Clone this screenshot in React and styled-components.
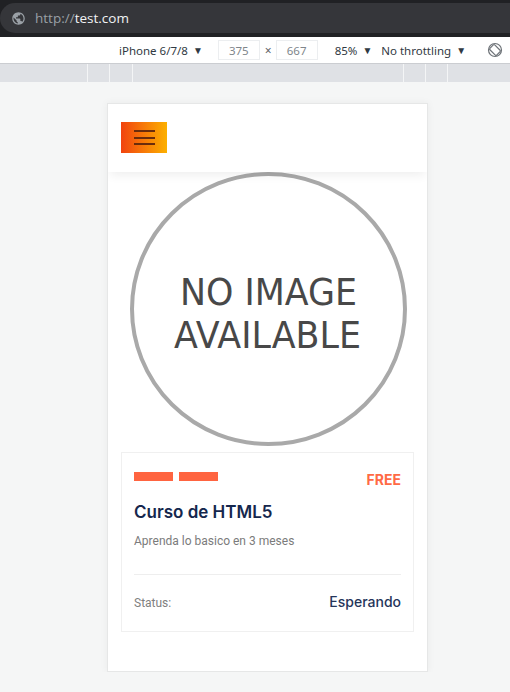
import React from 'react'
import styled, { createGlobalStyle } from 'styled-components'

const GlobalStyle = createGlobalStyle`
  html, body {
    margin: 0;
    padding: 0;
    background: #f5f6f6;
  }
  body {
    font-family: "Noto Sans", sans-serif;
  }
`

const BrowserBar = styled.div`
  height: 37px;
  background: #202124;
  box-sizing: border-box;
  padding: 3px 0 4px 0;
`

const AddressPill = styled.div`
  height: 30px;
  background: #35363a;
  border-top-left-radius: 15px;
  border-bottom-left-radius: 15px;
  display: flex;
  align-items: center;
  padding-left: 11px;
  gap: 9px;
  font-family: "Open Sans", sans-serif;
  font-size: 13.5px;
  color: #9aa0a6;
`

const Host = styled.span`
  color: #f1f3f4;
`

const DeviceBar = styled.div`
  height: 26px;
  background: #ffffff;
  border-bottom: 1px solid #cbcdd1;
  display: flex;
  align-items: center;
  padding-left: 119px;
  font-family: "Noto Sans", sans-serif;
  font-size: 11.5px;
  color: #303942;
`

const ToolItem = styled.div`
  display: flex;
  align-items: center;
  gap: 5px;
  margin-left: ${({ $ml }) => $ml || 0}px;
  white-space: nowrap;
`

const Caret = styled.span`
  font-size: 10px;
  color: #303942;
`

const SizeInput = styled.div`
  width: 42px;
  height: 20px;
  box-sizing: border-box;
  border: 1px solid #eceef0;
  display: flex;
  align-items: center;
  justify-content: center;
  color: #80868b;
  margin-left: ${({ $ml }) => $ml || 0}px;
`

const Times = styled.span`
  margin-left: 5px;
  margin-right: 4px;
  color: #5f6368;
  font-size: 12px;
`

const Ruler = styled.div`
  height: 18px;
  background: #dfe1e5;
  display: flex;
`

const RulerSeg = styled.div`
  box-sizing: border-box;
  width: ${({ $w }) => $w}px;
  height: 100%;
  border-right: 1px solid #f4f5f6;
  flex: ${({ $grow }) => ($grow ? 1 : 'none')};
  border-right-width: ${({ $grow }) => ($grow ? 0 : 1)}px;
`

const Phone = styled.div`
  margin: 21px 0 0 107px;
  width: 321px;
  height: 569px;
  box-sizing: border-box;
  border: 1px solid #e6e7e7;
  background: #ffffff;
  box-shadow: 0 0 8px rgba(0, 0, 0, 0.05);
  overflow: hidden;
  display: flex;
  flex-direction: column;
`

const Header = styled.header`
  height: 68px;
  flex: none;
  box-sizing: border-box;
  padding: 18px 13px 0;
  background: #fff;
  position: relative;
  z-index: 1;
  box-shadow: 0 5px 10px -2px rgba(0, 0, 0, 0.07);
`

const MenuButton = styled.div`
  width: 46px;
  height: 31px;
  background: linear-gradient(90deg, #f1430f 0%, #f77a08 50%, #fcb000 100%);
  display: flex;
  flex-direction: column;
  align-items: center;
  justify-content: center;
  gap: 4.5px;
`

const MenuLine = styled.span`
  display: block;
  width: 21px;
  height: 2px;
  background: #6a2c0c;
`

const ImageArea = styled.div`
  height: 280px;
  flex: none;
  display: flex;
  justify-content: center;
`

const Card = styled.div`
  margin: 0 13px;
  border: 1px solid #f0f0f0;
  padding: 19px 12px 18px;
`

const TopRow = styled.div`
  display: flex;
  justify-content: space-between;
  align-items: flex-start;
  height: 18px;
`

const Bars = styled.div`
  display: flex;
  gap: 6px;
`

const Bar = styled.span`
  display: block;
  width: 39px;
  height: 9px;
  background: #ff6440;
`

const Price = styled.span`
  font-family: "Inter", sans-serif;
  font-weight: 700;
  font-size: 14px;
  line-height: 18px;
  color: #ff6a45;
  margin-top: -1px;
`

const Title = styled.h3`
  margin: 10px 0 0;
  font-family: "Inter", sans-serif;
  font-weight: 600;
  font-size: 17px;
  line-height: 24px;
  color: #15274d;
`

const Desc = styled.p`
  margin: 9px 0 0;
  font-family: "Roboto", sans-serif;
  font-size: 12px;
  line-height: 16px;
  color: #7b7b7b;
`

const Footer = styled.div`
  margin-top: 25px;
  border-top: 1px solid #eeeeee;
  padding-top: 17px;
  display: flex;
  justify-content: space-between;
  align-items: baseline;
`

const StatusLabel = styled.span`
  font-family: "Roboto", sans-serif;
  font-size: 12px;
  line-height: 20px;
  color: #808080;
`

const StatusValue = styled.span`
  font-family: "Inter", sans-serif;
  font-weight: 500;
  font-size: 14px;
  line-height: 20px;
  color: #25355a;
`

const Globe = () => (
  <svg width="15" height="15" viewBox="0 0 24 24">
    <path
      fill="#9aa0a6"
      d="M12 2C6.48 2 2 6.48 2 12s4.48 10 10 10 10-4.48 10-10S17.52 2 12 2zm-1 17.93c-3.95-.49-7-3.85-7-7.93 0-.62.08-1.21.21-1.79L9 15v1c0 1.1.9 2 2 2v1.93zm6.9-2.54c-.26-.81-1-1.39-1.9-1.39h-1v-3c0-.55-.45-1-1-1H8v-2h2c.55 0 1-.45 1-1V7h2c1.1 0 2-.9 2-2v-.41c2.93 1.19 5 4.06 5 7.41 0 2.08-.8 3.97-2.1 5.39z"
    />
  </svg>
)

const RotateIcon = () => (
  <svg width="16" height="16" viewBox="0 0 16 16">
    <circle cx="8" cy="8" r="6.5" fill="none" stroke="#6e7378" strokeWidth="1.2" />
    <g transform="rotate(-45 8 8)">
      <rect x="4.6" y="3.2" width="6.8" height="9.6" rx="1" fill="#fff" stroke="#6e7378" strokeWidth="1.2" />
    </g>
  </svg>
)

const NoImage = () => (
  <svg width="318" height="280" viewBox="0 0 318 280">
    <ellipse cx="159.5" cy="137" rx="136.5" ry="135" fill="none" stroke="#a9a9a9" strokeWidth="4" />
    <text
      x="159.5"
      y="133"
      textAnchor="middle"
      textLength="177"
      lengthAdjust="spacingAndGlyphs"
      fontFamily="DejaVu Sans, sans-serif"
      fontSize="37"
      fill="#484848"
    >
      NO IMAGE
    </text>
    <text
      x="158.5"
      y="176"
      textAnchor="middle"
      textLength="187"
      lengthAdjust="spacingAndGlyphs"
      fontFamily="DejaVu Sans, sans-serif"
      fontSize="37"
      fill="#484848"
    >
      AVAILABLE
    </text>
  </svg>
)

const rulerSegments = [88, 22, 23, 271, 22, 22]

export default function App() {
  return (
    <>
      <GlobalStyle />
      <BrowserBar>
        <AddressPill>
          <Globe />
          <span>
            http://<Host>test.com</Host>
          </span>
        </AddressPill>
      </BrowserBar>

      <DeviceBar>
        <ToolItem>
          iPhone 6/7/8 <Caret>▼</Caret>
        </ToolItem>
        <SizeInput $ml={15}>375</SizeInput>
        <Times>×</Times>
        <SizeInput>667</SizeInput>
        <ToolItem $ml={17}>
          85% <Caret>▼</Caret>
        </ToolItem>
        <ToolItem $ml={9}>
          No throttling <Caret>▼</Caret>
        </ToolItem>
        <ToolItem $ml={21}>
          <RotateIcon />
        </ToolItem>
      </DeviceBar>

      <Ruler>
        {rulerSegments.map((w, i) => (
          <RulerSeg key={i} $w={w} />
        ))}
        <RulerSeg $grow />
      </Ruler>

      <Phone>
        <Header>
          <MenuButton>
            <MenuLine />
            <MenuLine />
            <MenuLine />
          </MenuButton>
        </Header>

        <ImageArea>
          <NoImage />
        </ImageArea>

        <Card>
          <TopRow>
            <Bars>
              <Bar />
              <Bar />
            </Bars>
            <Price>FREE</Price>
          </TopRow>
          <Title>Curso de HTML5</Title>
          <Desc>Aprenda lo basico en 3 meses</Desc>
          <Footer>
            <StatusLabel>Status:</StatusLabel>
            <StatusValue>Esperando</StatusValue>
          </Footer>
        </Card>
      </Phone>
    </>
  )
}
